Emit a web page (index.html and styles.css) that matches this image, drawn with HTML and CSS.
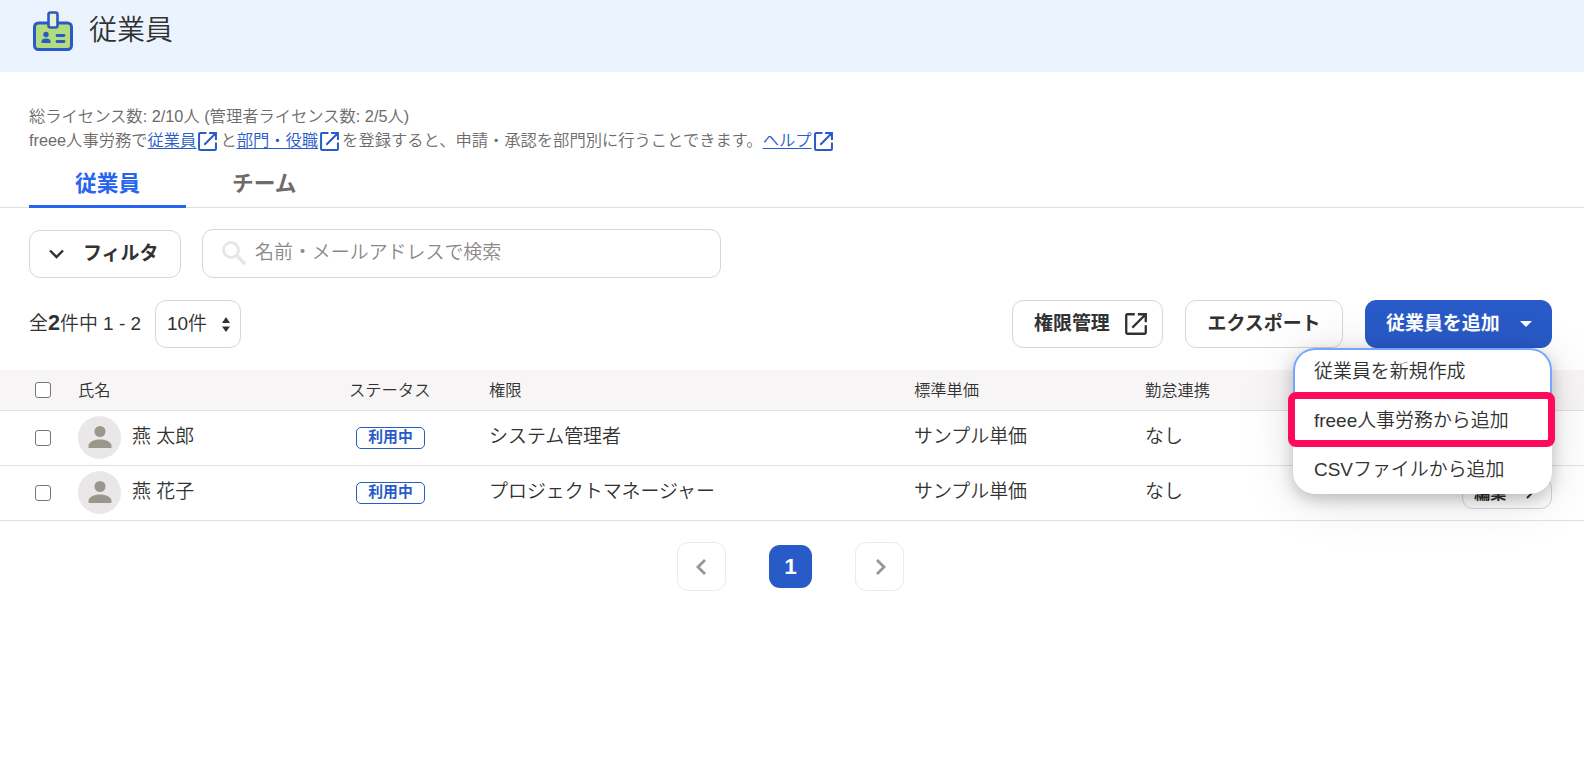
FILE: index.html
```html
<!DOCTYPE html>
<html lang="ja">
<head>
    <meta charset="UTF-8">
    <meta name="viewport" content="width=device-width, initial-scale=1.0">
    <title>従業員</title>
    <link rel="stylesheet" href="styles.css">
</head>
<body>
    <svg width="0" height="0" class="defs">
        <symbol id="external" viewBox="0 0 18 18">
            <path d="M8 1H2Q1 1 1 2V16Q1 17 2 17H16Q17 17 17 16V10M10.500 1H17V7.500M17 1L6 12" fill="none" stroke="currentColor" stroke-width="1.900"/>
        </symbol>
        <symbol id="person" viewBox="0 0 24 22">
            <circle cx="12" cy="5.5" r="5.5"/>
            <path d="M.5 22V20C.5 16 6 13.5 12 13.5S23.5 16 23.5 20V22Z"/>
        </symbol>
    </svg>

    <header class="header">
        <svg class="header-icon" width="40" height="40" viewBox="0 0 40 40">
            <rect x="1.5" y="12" width="37" height="26.500" rx="4" fill="#b4dc7d" stroke="#285ac8" stroke-width="3"/>
            <rect x="15.500" y="1.500" width="9" height="15" rx="2" fill="#e6f0d7" stroke="#285ac8" stroke-width="2.600"/>
            <circle cx="13" cy="23.500" r="2.700" fill="#285ac8"/>
            <path d="M8.500 32V30.500Q8.500 27.500 13 27.500T17.500 30.500V32Z" fill="#285ac8"/>
            <path d="M24 24.500H31M24 30.500H31" stroke="#285ac8" stroke-width="2.800" stroke-linecap="round"/>
        </svg>
        <h1>従業員</h1>
    </header>

    <main>
        <div class="info">
            <p>総ライセンス数: 2/10人 (管理者ライセンス数: 2/5人)</p>
            <p>freee人事労務で<a href="#">従業員</a><svg class="link-icon"><use href="#external"/></svg>と<a href="#">部門・役職</a><svg class="link-icon"><use href="#external"/></svg>を登録すると、申請・承認を部門別に行うことできます。<a href="#">ヘルプ</a><svg class="link-icon"><use href="#external"/></svg></p>
        </div>

        <nav class="tabs">
            <a class="tab active">従業員</a>
            <a class="tab">チーム</a>
        </nav>

        <div class="filters">
            <button class="button filter">
                <svg width="15" height="10" viewBox="0 0 15 10"><path d="M1 1.500L7.500 8L14 1.500" fill="none" stroke="currentColor" stroke-width="2.400"/></svg>
                <span>フィルタ</span>
            </button>
            <label class="search">
                <svg width="25" height="25" viewBox="0 0 25 25"><circle cx="9" cy="9" r="7.500" fill="none" stroke="#e6e6e6" stroke-width="2.800"/><path d="M14.500 14.500L23 23" stroke="#e6e6e6" stroke-width="3.600"/></svg>
                <input type="text" placeholder="名前・メールアドレスで検索">
            </label>
        </div>

        <div class="toolbar">
            <span class="count">全<b>2</b>件中 1 - 2</span>
            <button class="select">
                <span>10件</span>
                <svg width="8" height="15" viewBox="0 0 8 15"><path d="M0 6L4 0L8 6ZM0 9.500L4 15L8 9.500Z" fill="#323232"/></svg>
            </button>
            <div class="actions">
                <button class="button permission"><span>権限管理</span><svg width="22" height="22"><use href="#external"/></svg></button>
                <button class="button export"><span>エクスポート</span></button>
                <div class="dropdown">
                    <button class="button primary"><span>従業員を追加</span><svg width="12" height="6" viewBox="0 0 12 6"><path d="M0 0H12L6 6Z" fill="#fff"/></svg></button>
                    <ul class="menu">
                        <li class="focused">従業員を新規作成</li>
                        <li class="marked">freee人事労務から追加</li>
                        <li>CSVファイルから追加</li>
                    </ul>
                </div>
            </div>
        </div>

        <table class="members">
            <colgroup>
                <col class="col-check"><col class="col-name"><col class="col-status"><col class="col-role"><col class="col-price"><col class="col-link"><col>
            </colgroup>
            <thead>
                <tr>
                    <th class="check"><input type="checkbox"></th>
                    <th>氏名</th>
                    <th>ステータス</th>
                    <th>権限</th>
                    <th>標準単価</th>
                    <th>勤怠連携</th>
                    <th></th>
                </tr>
            </thead>
            <tbody>
                <tr>
                    <td class="check"><input type="checkbox"></td>
                    <td><div class="name"><span class="avatar"><svg><use href="#person"/></svg></span><span class="text">燕 太郎</span></div></td>
                    <td><span class="badge">利用中</span></td>
                    <td><span class="text">システム管理者</span></td>
                    <td><span class="text">サンプル単価</span></td>
                    <td><span class="text">なし</span></td>
                    <td></td>
                </tr>
                <tr>
                    <td class="check"><input type="checkbox"></td>
                    <td><div class="name"><span class="avatar"><svg><use href="#person"/></svg></span><span class="text">燕 花子</span></div></td>
                    <td><span class="badge">利用中</span></td>
                    <td><span class="text">プロジェクトマネージャー</span></td>
                    <td><span class="text">サンプル単価</span></td>
                    <td><span class="text">なし</span></td>
                    <td class="edit-cell"><button class="button edit"><span>編集</span><svg width="8" height="12" viewBox="0 0 8 12"><path d="M1 1L6 6L1 11" fill="none" stroke="currentColor" stroke-width="2"/></svg></button></td>
                </tr>
            </tbody>
        </table>

        <div class="pagination">
            <button class="page-arrow"><svg width="10" height="16" viewBox="0 0 10 16"><path d="M9 1L2 8L9 15" fill="none" stroke="#969696" stroke-width="2.800"/></svg></button>
            <button class="page-current">1</button>
            <button class="page-arrow next"><svg width="10" height="16" viewBox="0 0 10 16"><path d="M1 1L8 8L1 15" fill="none" stroke="#969696" stroke-width="2.800"/></svg></button>
        </div>
    </main>
</body>
</html>
```
FILE: styles.css
```css
* {
    box-sizing: border-box;
}

body {
    margin: 0;
    background: #fff;
    color: #323232;
    font-family: "Liberation Sans", "Noto Sans CJK JP", sans-serif;
    font-size: 18.95px;
    font-weight: 350;
}

button, input {
    font: inherit;
    color: inherit;
}

button {
    padding: 0;
    background: #fff;
}

.defs {
    position: absolute;
}

.header {
    display: flex;
    height: 72px;
    padding: 11px 0 0 33px;
    gap: 16px;
    background: #ebf3ff;
}

.header h1 {
    margin: 0;
    font-size: 28px;
    font-weight: 350;
    line-height: 40px;
}

.info {
    padding: 32px 29px 0;
    font-size: 16.3px;
    line-height: 24px;
    color: #6e6b6b;
}

.info p {
    margin: 0;
    height: 24px;
    white-space: nowrap;
}

.info a {
    color: #285ac8;
    text-underline-offset: 2px;
}

.link-icon {
    width: 19px;
    height: 19px;
    margin: 0 3px 0 2px;
    vertical-align: -5px;
    color: #285ac8;
}

.tabs {
    display: flex;
    height: 56px;
    padding-left: 29px;
    border-bottom: 1px solid #e1e1e1;
}

.tab {
    height: 56px;
    padding: 16px 46px 0;
    font-size: 21.7px;
    font-weight: bold;
    line-height: 32px;
    color: #6e6b6b;
}

.tab.active {
    color: #2864f0;
    border-bottom: 3px solid #2864f0;
}

.filters {
    display: flex;
    align-items: flex-end;
    gap: 21px;
    padding: 21px 29px 0;
}

.button {
    display: flex;
    align-items: center;
    height: 48px;
    border: 1px solid #d7d7d7;
    border-radius: 11px;
    font-weight: bold;
}

.button span {
    line-height: 28px;
    white-space: nowrap;
}

.filter {
    width: 152px;
    padding-left: 19px;
    gap: 19px;
}

.search {
    display: flex;
    align-items: center;
    width: 519px;
    height: 49px;
    padding-left: 19px;
    gap: 8px;
    border: 1px solid #d7d7d7;
    border-radius: 11px;
}

.search svg {
    margin-bottom: 1px;
}

.search input {
    flex: 1;
    height: 30px;
    margin-bottom: 1px;
    padding: 0;
    border: 0;
    outline: 0;
}

.search input::placeholder {
    color: #8c8989;
}

.toolbar {
    display: flex;
    align-items: center;
    padding: 22px 32px 22px 29px;
}

.count {
    width: 126px;
    margin-bottom: 2px;
    line-height: 28px;
    white-space: nowrap;
}

.count b {
    font-size: 21.6px;
    font-weight: bold;
}

.select {
    display: flex;
    align-items: center;
    justify-content: space-between;
    width: 86px;
    height: 48px;
    padding: 0 10px 0 11px;
    border: 1px solid #d7d7d7;
    border-radius: 11px;
}

.select span {
    margin-bottom: 5px;
}

.actions {
    display: flex;
    gap: 22px;
    margin-left: auto;
}

.permission {
    width: 151px;
    padding-left: 21px;
    gap: 15px;
}

.export {
    width: 158px;
    justify-content: center;
}

.dropdown {
    position: relative;
}

.primary {
    width: 187px;
    padding-left: 20px;
    gap: 20px;
    border-color: #285ac8;
    background: #285ac8;
    color: #fff;
}

.menu {
    position: absolute;
    top: 48px;
    right: 0;
    z-index: 1;
    width: 259px;
    height: 146px;
    margin: 0;
    padding: 0;
    border-radius: 22px;
    background: #fff;
    box-shadow: 0 5px 16px rgba(0, 0, 0, .22), 0 5px 54px rgba(0, 0, 0, .12);
    list-style: none;
    white-space: nowrap;
}

.menu li {
    height: 49px;
    padding-left: 21px;
    line-height: 53px;
}

.menu .focused {
    padding-left: 19px;
    border: 2px solid #73a5ff;
    border-bottom: 0;
    border-radius: 22px 22px 0 0;
    line-height: 43px;
}

.menu .marked {
    width: 267px;
    height: 55px;
    margin: -5px 0 -4px -5px;
    padding-left: 19px;
    border: 7px solid #ff0a5a;
    border-radius: 8px;
    line-height: 44px;
}

.members {
    width: 100%;
    table-layout: fixed;
    border-collapse: separate;
    border-spacing: 0;
}

.col-check { width: 78px; }
.col-name { width: 271px; }
.col-status { width: 140px; }
.col-role { width: 425px; }
.col-price { width: 231px; }
.col-link { width: 200px; }

.members th, .members td {
    padding: 0;
    border-bottom: 1px solid #e1e1e1;
    text-align: left;
    white-space: nowrap;
}

.members th {
    height: 41px;
    background: #f7f5f6;
    font-size: 16.3px;
    font-weight: 350;
    line-height: 24px;
}

.members td {
    height: 55px;
}

.members .check {
    padding-left: 35px;
}

.check input {
    appearance: none;
    display: block;
    width: 16px;
    height: 16px;
    margin: 0;
    border: 1px solid #767676;
    border-radius: 3px;
    background: #fff;
}

.text {
    display: inline-block;
    padding-bottom: 7px;
}

.name {
    display: flex;
    align-items: center;
    gap: 11px;
}

.name .text {
    padding-bottom: 5px;
}

.members td .name {
    padding-bottom: 2px;
}

.avatar {
    display: flex;
    align-items: center;
    justify-content: center;
    width: 43px;
    height: 43px;
    border-radius: 50%;
    background: #e9e7e7;
}

.avatar svg {
    width: 24px;
    height: 22px;
    fill: #9b968c;
}

.badge {
    display: block;
    width: 69px;
    height: 22px;
    margin-left: 7px;
    border: 1px solid #285ac8;
    border-radius: 5px;
    color: #285ac8;
    font-size: 14.8px;
    font-weight: bold;
    line-height: 18px;
    text-align: center;
}

.edit {
    width: 90px;
    height: 32px;
    margin-left: auto;
    padding-left: 11px;
    gap: 20px;
    font-size: 16.2px;
}

.members .edit-cell {
    padding-right: 32px;
}

.pagination {
    display: flex;
    align-items: center;
    justify-content: center;
    gap: 43px;
    padding-top: 21px;
    margin-right: 3px;
}

.page-arrow {
    display: flex;
    align-items: center;
    justify-content: center;
    width: 49px;
    height: 49px;
    padding-right: 2px;
    border: 1px solid #ebebeb;
    border-radius: 11px;
}

.page-arrow.next {
    padding: 0 0 0 2px;
}

.page-current {
    width: 43px;
    height: 43px;
    border: 0;
    border-radius: 11px;
    background: #285ac8;
    color: #fff;
    font-size: 22.5px;
    font-weight: bold;
}
```
